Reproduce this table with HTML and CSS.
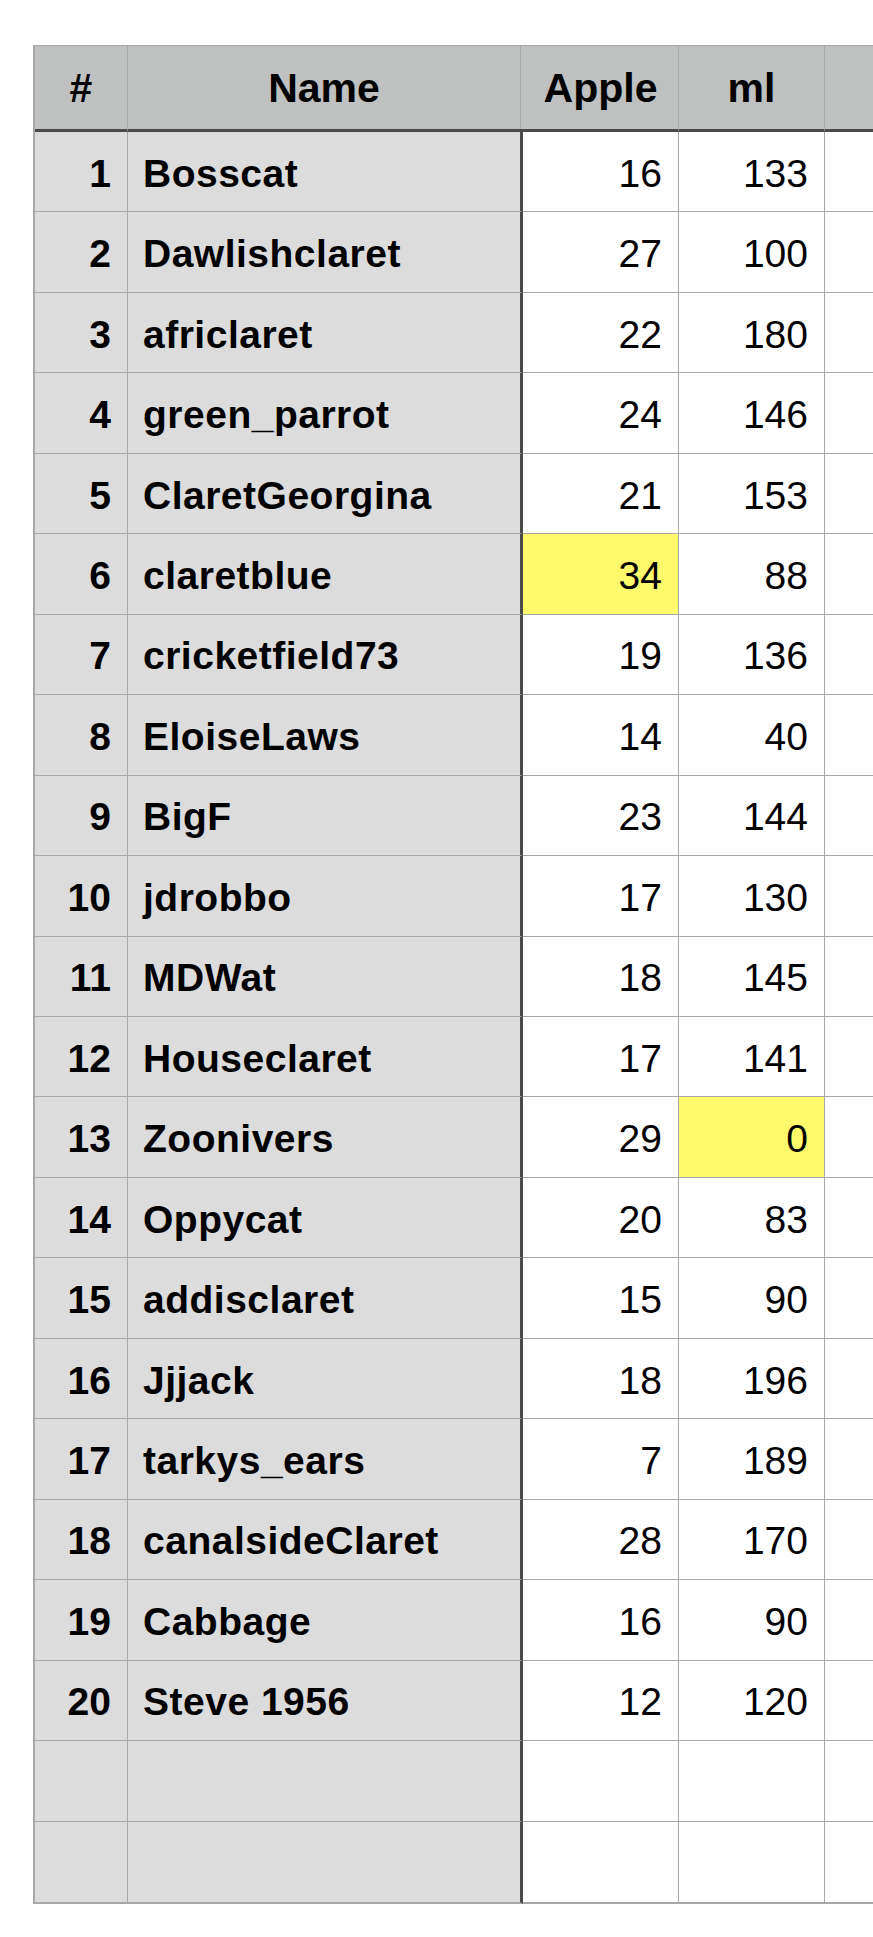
FILE: index.html
```html
<!DOCTYPE html>
<html>
<head>
<meta charset="utf-8">
<link rel="stylesheet" href="styles.css">
</head>
<body>
<div class="sheet" role="table">
  <div class="row head" role="row">
    <div class="cell h" role="columnheader">#</div>
    <div class="cell h name-h" role="columnheader">Name</div>
    <div class="cell h" role="columnheader">Apple</div>
    <div class="cell h" role="columnheader">ml</div>
    <div class="cell h" role="columnheader"></div>
  </div>
  <div class="row" role="row"><div class="cell num">1</div><div class="cell name">Bosscat</div><div class="cell val">16</div><div class="cell val">133</div><div class="cell val"></div></div>
  <div class="row" role="row"><div class="cell num">2</div><div class="cell name">Dawlishclaret</div><div class="cell val">27</div><div class="cell val">100</div><div class="cell val"></div></div>
  <div class="row" role="row"><div class="cell num">3</div><div class="cell name">africlaret</div><div class="cell val">22</div><div class="cell val">180</div><div class="cell val"></div></div>
  <div class="row" role="row"><div class="cell num">4</div><div class="cell name">green_parrot</div><div class="cell val">24</div><div class="cell val">146</div><div class="cell val"></div></div>
  <div class="row" role="row"><div class="cell num">5</div><div class="cell name">ClaretGeorgina</div><div class="cell val">21</div><div class="cell val">153</div><div class="cell val"></div></div>
  <div class="row" role="row"><div class="cell num">6</div><div class="cell name">claretblue</div><div class="cell val hl">34</div><div class="cell val">88</div><div class="cell val"></div></div>
  <div class="row" role="row"><div class="cell num">7</div><div class="cell name">cricketfield73</div><div class="cell val">19</div><div class="cell val">136</div><div class="cell val"></div></div>
  <div class="row" role="row"><div class="cell num">8</div><div class="cell name">EloiseLaws</div><div class="cell val">14</div><div class="cell val">40</div><div class="cell val"></div></div>
  <div class="row" role="row"><div class="cell num">9</div><div class="cell name">BigF</div><div class="cell val">23</div><div class="cell val">144</div><div class="cell val"></div></div>
  <div class="row" role="row"><div class="cell num">10</div><div class="cell name">jdrobbo</div><div class="cell val">17</div><div class="cell val">130</div><div class="cell val"></div></div>
  <div class="row" role="row"><div class="cell num">11</div><div class="cell name">MDWat</div><div class="cell val">18</div><div class="cell val">145</div><div class="cell val"></div></div>
  <div class="row" role="row"><div class="cell num">12</div><div class="cell name">Houseclaret</div><div class="cell val">17</div><div class="cell val">141</div><div class="cell val"></div></div>
  <div class="row" role="row"><div class="cell num">13</div><div class="cell name">Zoonivers</div><div class="cell val">29</div><div class="cell val hl">0</div><div class="cell val"></div></div>
  <div class="row" role="row"><div class="cell num">14</div><div class="cell name">Oppycat</div><div class="cell val">20</div><div class="cell val">83</div><div class="cell val"></div></div>
  <div class="row" role="row"><div class="cell num">15</div><div class="cell name">addisclaret</div><div class="cell val">15</div><div class="cell val">90</div><div class="cell val"></div></div>
  <div class="row" role="row"><div class="cell num">16</div><div class="cell name">Jjjack</div><div class="cell val">18</div><div class="cell val">196</div><div class="cell val"></div></div>
  <div class="row" role="row"><div class="cell num">17</div><div class="cell name">tarkys_ears</div><div class="cell val">7</div><div class="cell val">189</div><div class="cell val"></div></div>
  <div class="row" role="row"><div class="cell num">18</div><div class="cell name">canalsideClaret</div><div class="cell val">28</div><div class="cell val">170</div><div class="cell val"></div></div>
  <div class="row" role="row"><div class="cell num">19</div><div class="cell name">Cabbage</div><div class="cell val">16</div><div class="cell val">90</div><div class="cell val"></div></div>
  <div class="row" role="row"><div class="cell num">20</div><div class="cell name">Steve 1956</div><div class="cell val">12</div><div class="cell val">120</div><div class="cell val"></div></div>
  <div class="row" role="row"><div class="cell num"></div><div class="cell name"></div><div class="cell val"></div><div class="cell val"></div><div class="cell val"></div></div>
  <div class="row last" role="row"><div class="cell num"></div><div class="cell name"></div><div class="cell val"></div><div class="cell val"></div><div class="cell val"></div></div>
</div>
</body>
</html>
```

FILE: styles.css
```css
* {
  box-sizing: border-box;
}

html, body {
  margin: 0;
  padding: 0;
  background: #ffffff;
  overflow: hidden;
}

body {
  padding: 45px 0 0 33px;
  font-family: "Liberation Sans", Arial, Helvetica, sans-serif;
  color: #000000;
}

.sheet {
  display: grid;
  grid-template-columns: 93px 395px 156px 146px 146px;
  grid-template-rows: 86px repeat(21, 80.46px) 82px;
  width: 938px;
  border-top: 1px solid #a8a8a8;
  border-left: 2px solid #a8a8a8;
}

.row {
  display: contents;
}

.cell {
  display: flex;
  align-items: center;
  padding: 4px 15px 0;
  border-right: 1px solid #a8a8a8;
  border-bottom: 1px solid #a8a8a8;
  white-space: nowrap;
  overflow: hidden;
  font-size: 39px;
}

.cell.h {
  justify-content: center;
  background: #bfc1c0;
  font-size: 41px;
  font-weight: bold;
  padding: 2px 4px 0;
  border-bottom: 3px solid #4a4a4a;
}

.cell.name-h {
  border-right: none;
  padding-right: 7px;
  background: linear-gradient(to left, #bfc1c0 2px, #a8a8a8 2px, #a8a8a8 3px, #bfc1c0 3px);
}

.last .cell {
  border-bottom-width: 2px;
}

.cell.num {
  justify-content: flex-end;
  background: #dcdcdc;
  font-weight: bold;
  padding-right: 16px;
}

.cell.name {
  background: #dcdcdc;
  font-weight: bold;
  letter-spacing: 0.5px;
  border-right: 3px solid #4a4a4a;
}

.cell.val {
  justify-content: flex-end;
  background: #ffffff;
  padding-right: 16px;
}

.cell.hl {
  background: #fefa6c;
}
```
